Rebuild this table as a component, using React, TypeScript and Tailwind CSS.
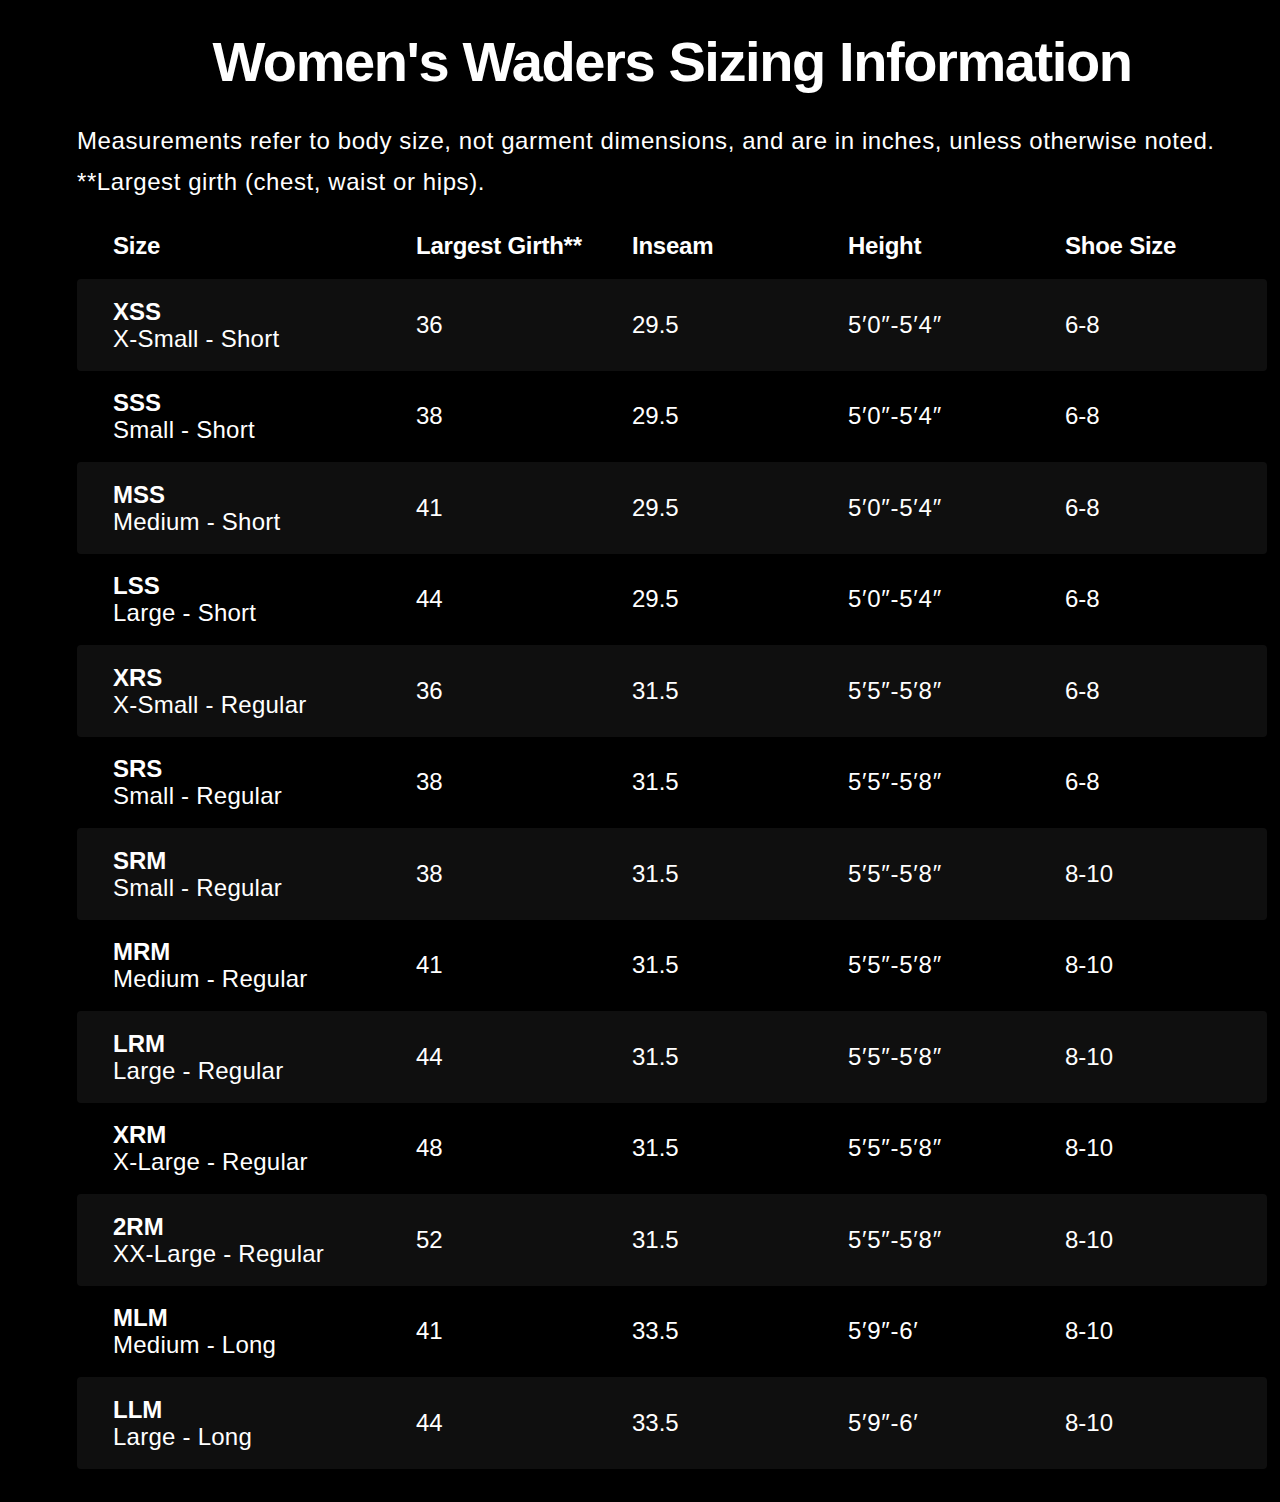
import React from "react";

const rows = [
  ["XSS", "X-Small - Short", "36", "29.5", "5′0″-5′4″", "6-8"],
  ["SSS", "Small - Short", "38", "29.5", "5′0″-5′4″", "6-8"],
  ["MSS", "Medium - Short", "41", "29.5", "5′0″-5′4″", "6-8"],
  ["LSS", "Large - Short", "44", "29.5", "5′0″-5′4″", "6-8"],
  ["XRS", "X-Small - Regular", "36", "31.5", "5′5″-5′8″", "6-8"],
  ["SRS", "Small - Regular", "38", "31.5", "5′5″-5′8″", "6-8"],
  ["SRM", "Small - Regular", "38", "31.5", "5′5″-5′8″", "8-10"],
  ["MRM", "Medium - Regular", "41", "31.5", "5′5″-5′8″", "8-10"],
  ["LRM", "Large - Regular", "44", "31.5", "5′5″-5′8″", "8-10"],
  ["XRM", "X-Large - Regular", "48", "31.5", "5′5″-5′8″", "8-10"],
  ["2RM", "XX-Large - Regular", "52", "31.5", "5′5″-5′8″", "8-10"],
  ["MLM", "Medium - Long", "41", "33.5", "5′9″-6′", "8-10"],
  ["LLM", "Large - Long", "44", "33.5", "5′9″-6′", "8-10"],
];

export default function App() {
  return (
    <div
      className="min-h-[1502px] w-full bg-black text-white"
      style={{ fontFamily: '"Liberation Sans", Arial, sans-serif' }}
    >
      <div className="ml-[77px] w-[1190px] pb-[33px] pt-[28px]">
        <h1 className="text-center text-[56px] font-bold leading-[68px] tracking-[-0.025em]">
          Women's Waders Sizing Information
        </h1>
        <div className="mt-[24px] text-[24px] leading-[41px] tracking-[0.024em] text-white">
          <p>
            Measurements refer to body size, not garment dimensions, and are in inches, unless otherwise noted.
          </p>
          <p>**Largest girth (chest, waist or hips).</p>
        </div>
        <div className="mt-[22px]">
          <div className="grid h-[55px] grid-cols-[303px_216px_216px_217px_1fr] items-center pb-[11px] text-[24px] font-bold tracking-[-0.01em]">
            <div className="pl-9">Size</div>
            <div className="pl-9">Largest Girth**</div>
            <div className="pl-9">Inseam</div>
            <div className="pl-9">Height</div>
            <div className="pl-9">Shoe Size</div>
          </div>
          {rows.map((r, i) => (
            <div
              key={i}
              className={
                "grid h-[91.5px] grid-cols-[303px_216px_216px_217px_1fr] items-center rounded-[4px] text-[24px] " +
                (i % 2 === 0 ? "bg-[#0f0f0f]" : "bg-black")
              }
            >
              <div className="pl-9 leading-[27px]">
                <div className="font-bold">{r[0]}</div>
                <div className="tracking-[0.01em]">{r[1]}</div>
              </div>
              <div className="pl-9">{r[2]}</div>
              <div className="pl-9">{r[3]}</div>
              <div className="pl-9 tracking-[0.03em]">{r[4]}</div>
              <div className="pl-9">{r[5]}</div>
            </div>
          ))}
        </div>
      </div>
    </div>
  );
}
